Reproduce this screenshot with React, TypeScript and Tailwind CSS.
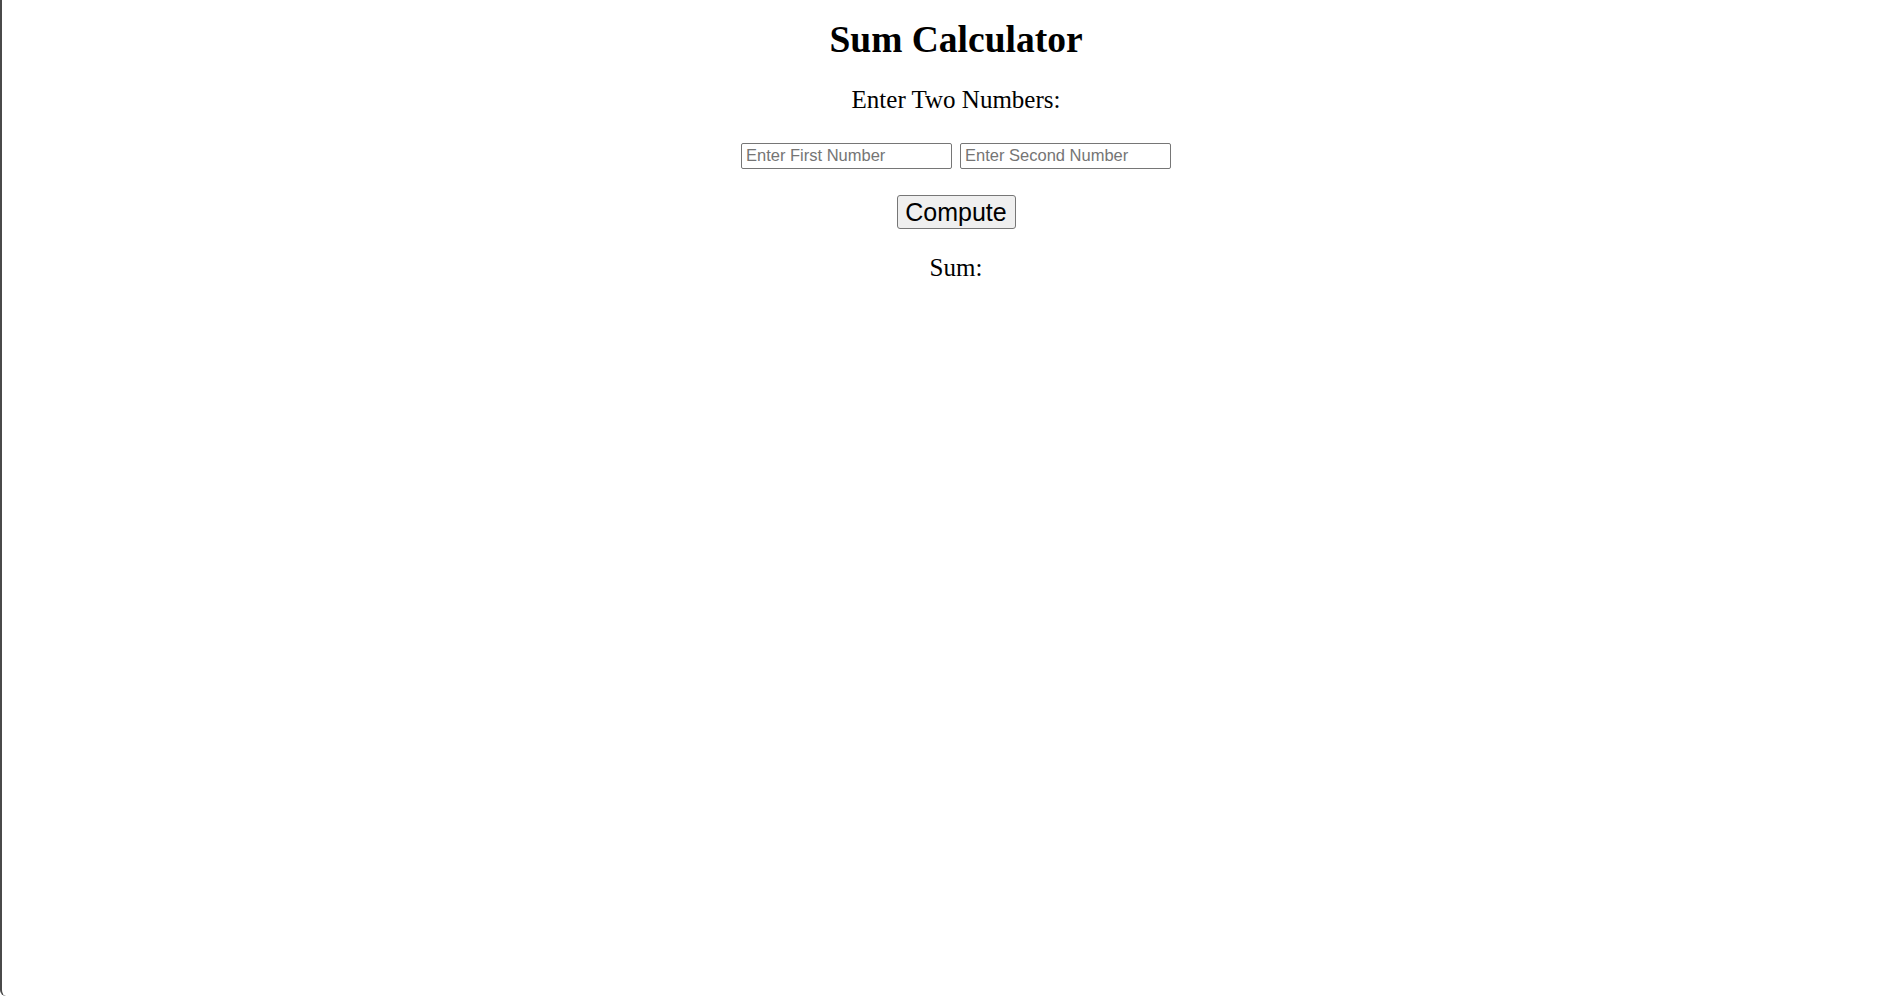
import { useState } from "react";

export default function App() {
  const [first, setFirst] = useState("");
  const [second, setSecond] = useState("");
  const [sum, setSum] = useState<number | null>(null);

  const compute = () => {
    setSum(Number(first) + Number(second));
  };

  return (
    <div className="h-[996px] w-full border-l-2 border-[#4a4a4a] rounded-bl-[6px] bg-white">
      <div className="flex flex-col items-center pl-[19px] text-black font-['Liberation_Serif',serif]">
        {/* Title */}
        <h1 className="mt-[18px] text-[37.5px] leading-[44px] font-bold">Sum Calculator</h1>

        {/* Prompt */}
        <p className="mt-[23px] text-[25px] leading-[30px]">Enter Two Numbers:</p>

        {/* Inputs */}
        <div className="mt-[28px] flex items-center gap-[8px]">
          <input
            type="text"
            value={first}
            onChange={(e) => setFirst(e.target.value)}
            placeholder="Enter First Number"
            className="w-[211px] h-[26px] px-[4px] pb-[2px] border border-[#767676] rounded-[2px] text-[16.5px] font-['Liberation_Sans',sans-serif] placeholder:text-[#757575] outline-none"
          />
          <input
            type="text"
            value={second}
            onChange={(e) => setSecond(e.target.value)}
            placeholder="Enter Second Number"
            className="w-[211px] h-[26px] px-[4px] pb-[2px] border border-[#767676] rounded-[2px] text-[16.5px] font-['Liberation_Sans',sans-serif] placeholder:text-[#757575] outline-none"
          />
        </div>

        {/* Button */}
        <button
          type="button"
          onClick={compute}
          className="mt-[26px] w-[119px] h-[34px] bg-[#efefef] border border-[#767676] rounded-[3px] text-[25px] leading-none font-['Liberation_Sans',sans-serif] text-black"
        >
          Compute
        </button>

        {/* Result */}
        <p className="mt-[25px] text-[25px] leading-[28px]">Sum: {sum !== null ? sum : ""}</p>
      </div>
    </div>
  );
}
